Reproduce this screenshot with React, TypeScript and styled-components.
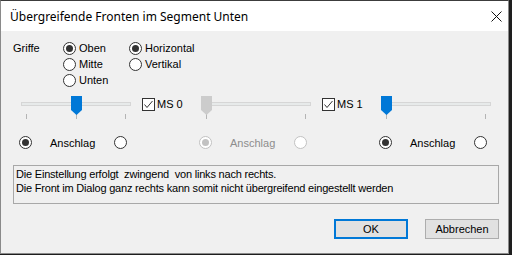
import { createGlobalStyle, styled } from "styled-components";

const GlobalStyle = createGlobalStyle`
  html, body {
    margin: 0;
    padding: 0;
    background: #1e1e1e;
  }
  body {
    width: 512px;
    height: 255px;
    overflow: hidden;
    font-family: "Liberation Sans", Arial, sans-serif;
    font-size: 11px;
    color: #000;
  }
`;

const WindowFrame = styled.div`
  box-sizing: border-box;
  width: 509px;
  height: 254px;
  border: 1px solid #8a8a8a;
  border-top-color: #3c3c3c;
  background: #f0f0f0;
  display: flex;
  flex-direction: column;
  overflow: hidden;
`;

const TitleBar = styled.div`
  height: 30px;
  background: #fff;
  display: flex;
  align-items: center;
  padding-left: 9px;
  padding-right: 6px;
`;

const TitleText = styled.div`
  flex: 1;
  font-family: "Noto Sans", "Open Sans", sans-serif;
  font-size: 12px;
  color: #000;
`;

const CloseIcon = styled.svg`
  width: 11px;
  height: 11px;
  display: block;
`;

const GriffeSection = styled.div`
  display: flex;
  margin-top: 9px;
  padding-left: 12px;
`;

const GroupLabel = styled.div`
  width: 50px;
  height: 16px;
  line-height: 16px;
`;

const RadioColumn = styled.div<{ $width: number }>`
  width: ${(p) => p.$width}px;
  display: flex;
  flex-direction: column;
`;

const RadioRow = styled.div`
  height: 16px;
  display: flex;
  align-items: center;
  gap: 3px;
`;

const Circle = styled.span<{ $disabled?: boolean }>`
  box-sizing: border-box;
  width: 13px;
  height: 13px;
  flex: none;
  border-radius: 50%;
  border: 1px solid ${(p) => (p.$disabled ? "#c2c2c2" : "#333")};
  background: #fff;
  display: flex;
  align-items: center;
  justify-content: center;
`;

const Dot = styled.span<{ $disabled?: boolean }>`
  width: 7px;
  height: 7px;
  border-radius: 50%;
  background: ${(p) => (p.$disabled ? "#c2c2c2" : "#333")};
`;

const Radio = ({ checked, disabled }: { checked?: boolean; disabled?: boolean }) => (
  <Circle $disabled={disabled}>{checked && <Dot $disabled={disabled} />}</Circle>
);

const ColumnsRow = styled.div`
  display: flex;
  margin-top: 8px;
  padding-left: 18px;
`;

const SliderColumn = styled.div`
  flex: none;
  width: 180px;
  display: flex;
  flex-direction: column;
`;

const SliderLine = styled.div`
  display: flex;
  align-items: flex-start;
  padding-left: 2px;
`;

const SliderBox = styled.div`
  flex: none;
  position: relative;
  width: 110px;
  height: 24px;
`;

const Track = styled.div`
  box-sizing: border-box;
  margin-top: 6px;
  height: 4px;
  background: #e7eaea;
  border: 1px solid #d6d6d6;
`;

const Ticks = styled.div`
  margin-top: 8px;
  height: 5px;
  display: flex;
  justify-content: space-between;
  padding: 0 5px;
`;

const Tick = styled.span`
  width: 1px;
  height: 5px;
  background: #b4b4b4;
`;

const Thumb = styled.svg`
  position: absolute;
  top: 0;
  width: 11px;
  height: 19px;
  display: block;
`;

const Slider = ({ value, max, disabled }: { value: number; max: number; disabled?: boolean }) => (
  <SliderBox>
    <Track />
    <Ticks>
      {Array.from({ length: max + 1 }).map((_, i) => (
        <Tick key={i} />
      ))}
    </Ticks>
    <Thumb viewBox="0 0 11 19" style={{ left: (value / max) * 99 }}>
      <path d="M0 0H11V14L5.5 19L0 14Z" fill={disabled ? "#cccccc" : "#0078d7"} />
    </Thumb>
  </SliderBox>
);

const CheckWrap = styled.div`
  display: flex;
  align-items: center;
  gap: 2px;
  margin-left: 11px;
  margin-top: 2px;
  height: 13px;
  white-space: nowrap;
`;

const CheckBox = styled.span`
  box-sizing: border-box;
  flex: none;
  width: 13px;
  height: 13px;
  border: 1px solid #333;
  background: #fff;
  display: flex;
  align-items: center;
  justify-content: center;
`;

const CheckLabel = styled.span`
  font-size: 11px;
  line-height: 13px;
`;

const AnchorRow = styled.div`
  display: flex;
  align-items: center;
  height: 13px;
  margin-top: 16px;
`;

const AnchorLabel = styled.span<{ $disabled?: boolean }>`
  width: 64px;
  margin-left: 18px;
  color: ${(p) => (p.$disabled ? "#8d8d8d" : "#000")};
`;

const InfoBox = styled.div`
  box-sizing: border-box;
  width: 486px;
  height: 39px;
  margin-top: 16px;
  margin-left: 12px;
  border: 1px solid #a8a8a8;
  padding: 1px 2px;
  line-height: 14px;
  letter-spacing: -0.2px;
  white-space: pre;
`;

const ButtonRow = styled.div`
  display: flex;
  justify-content: flex-end;
  gap: 17px;
  margin-top: 15px;
  padding-right: 9px;
`;

const DialogButton = styled.button<{ $default?: boolean }>`
  box-sizing: border-box;
  width: 74px;
  height: 20px;
  padding: 0;
  background: #e1e1e1;
  border: ${(p) => (p.$default ? "2px solid #0078d7" : "1px solid #adadad")};
  font-family: "Liberation Sans", Arial, sans-serif;
  font-size: 11px;
  color: #000;
`;

interface ColumnProps {
  value: number;
  max: number;
  disabled?: boolean;
  check?: string;
}

const FrontColumn = ({ value, max, disabled, check }: ColumnProps) => (
  <SliderColumn>
    <SliderLine>
      <Slider value={value} max={max} disabled={disabled} />
      {check && (
        <CheckWrap>
          <CheckBox>
            <svg width="11" height="11" viewBox="0 0 11 11">
              <polyline points="1.5,5.5 4,8.5 9.5,2" fill="none" stroke="#333" strokeWidth="1" />
            </svg>
          </CheckBox>
          <CheckLabel>{check}</CheckLabel>
        </CheckWrap>
      )}
    </SliderLine>
    <AnchorRow>
      <Radio checked disabled={disabled} />
      <AnchorLabel $disabled={disabled}>Anschlag</AnchorLabel>
      <Radio disabled={disabled} />
    </AnchorRow>
  </SliderColumn>
);

export default function App() {
  return (
    <>
      <GlobalStyle />
      <WindowFrame>
        <TitleBar>
          <TitleText>Übergreifende Fronten im Segment Unten</TitleText>
          <CloseIcon viewBox="0 0 11 11">
            <path d="M0.5 0.5L10.5 10.5M10.5 0.5L0.5 10.5" stroke="#111" strokeWidth="1" />
          </CloseIcon>
        </TitleBar>
        <GriffeSection>
          <GroupLabel>Griffe</GroupLabel>
          <RadioColumn $width={66}>
            <RadioRow>
              <Radio checked />
              Oben
            </RadioRow>
            <RadioRow>
              <Radio />
              Mitte
            </RadioRow>
            <RadioRow>
              <Radio />
              Unten
            </RadioRow>
          </RadioColumn>
          <RadioColumn $width={100}>
            <RadioRow>
              <Radio checked />
              Horizontal
            </RadioRow>
            <RadioRow>
              <Radio />
              Vertikal
            </RadioRow>
          </RadioColumn>
        </GriffeSection>
        <ColumnsRow>
          <FrontColumn value={1} max={2} check="MS 0" />
          <FrontColumn value={0} max={1} disabled check="MS 1" />
          <FrontColumn value={0} max={1} />
        </ColumnsRow>
        <InfoBox>
          {"Die Einstellung erfolgt  zwingend  von links nach rechts.\nDie Front im Dialog ganz rechts kann somit nicht übergreifend eingestellt werden"}
        </InfoBox>
        <ButtonRow>
          <DialogButton $default>OK</DialogButton>
          <DialogButton>Abbrechen</DialogButton>
        </ButtonRow>
      </WindowFrame>
    </>
  );
}
